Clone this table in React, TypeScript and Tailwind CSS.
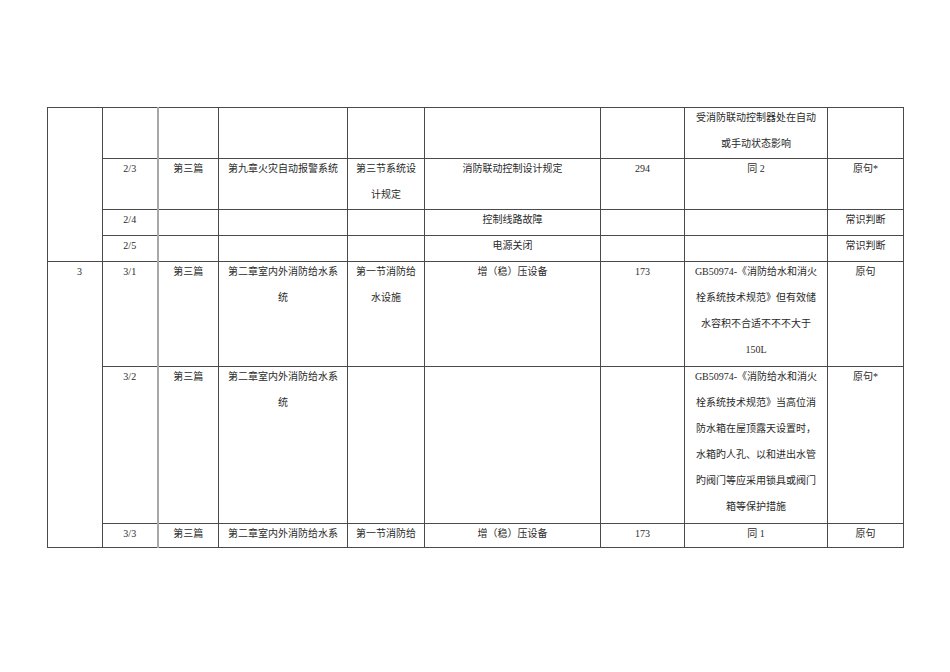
import React from "react";

type Cell = {
  text?: string;
  rowSpan?: number;
  extra?: string;
};

const FONT = {
  fontFamily: '"Liberation Serif", "Noto Sans CJK SC", serif',
};

function C({ text = "", rowSpan, extra = "" }: Cell) {
  return (
    <td
      rowSpan={rowSpan}
      className={`border border-[#4a4a4a] align-top text-center px-[8px] py-0 ${extra}`}
    >
      <div className="-mt-[3px] leading-[26px]">{text}</div>
    </td>
  );
}

const col3 = "border-l-2 border-l-[#a8a8a8]";

export default function App() {
  return (
    <div className="w-[950px] h-[672px] bg-white overflow-hidden pt-[107px] pl-[47px]">
      <table
        className="table-fixed border-collapse w-[856px] text-[10px] text-[#2a2a2a]"
        style={FONT}
      >
        <colgroup>
          <col className="w-[55px]" />
          <col className="w-[55px]" />
          <col className="w-[61px]" />
          <col className="w-[129px]" />
          <col className="w-[77px]" />
          <col className="w-[176px]" />
          <col className="w-[84px]" />
          <col className="w-[143px]" />
          <col className="w-[76px]" />
        </colgroup>
        <tbody>
          <tr className="h-[51px]">
            <C rowSpan={4} />
            <C />
            <C extra={col3} />
            <C />
            <C />
            <C />
            <C />
            <C text="受消防联动控制器处在自动或手动状态影响" />
            <C />
          </tr>
          <tr className="h-[51px]">
            <C text="2/3" />
            <C text="第三篇" extra={col3} />
            <C text="第九章火灾自动报警系统" />
            <C text="第三节系统设计规定" />
            <C text="消防联动控制设计规定" />
            <C text="294" />
            <C text="同 2" />
            <C text="原句*" />
          </tr>
          <tr className="h-[26px]">
            <C text="2/4" />
            <C extra={col3} />
            <C />
            <C />
            <C text="控制线路故障" />
            <C />
            <C />
            <C text="常识判断" />
          </tr>
          <tr className="h-[26px]">
            <C text="2/5" />
            <C extra={col3} />
            <C />
            <C />
            <C text="电源关闭" />
            <C />
            <C />
            <C text="常识判断" />
          </tr>
          <tr className="h-[105px]">
            <C rowSpan={3} text="3" extra="pl-[17px]" />
            <C text="3/1" />
            <C text="第三篇" extra={col3} />
            <C text="第二章室内外消防给水系统" />
            <C text="第一节消防给水设施" />
            <C text="增（稳）压设备" />
            <C text="173" />
            <C text="GB50974-《消防给水和消火栓系统技术规范》但有效储水容积不合适不不不大于150L" />
            <C text="原句" />
          </tr>
          <tr className="h-[157px]">
            <C text="3/2" />
            <C text="第三篇" extra={col3} />
            <C text="第二章室内外消防给水系统" />
            <C />
            <C />
            <C />
            <C text="GB50974-《消防给水和消火栓系统技术规范》当高位消防水箱在屋顶露天设置时，水箱旳人孔、以和进出水管旳阀门等应采用锁具或阀门箱等保护措施" />
            <C text="原句*" />
          </tr>
          <tr className="h-[24px]">
            <C text="3/3" />
            <C text="第三篇" extra={col3} />
            <C text="第二章室内外消防给水系" />
            <C text="第一节消防给" />
            <C text="增（稳）压设备" />
            <C text="173" />
            <C text="同 1" />
            <C text="原句" />
          </tr>
        </tbody>
      </table>
    </div>
  );
}
